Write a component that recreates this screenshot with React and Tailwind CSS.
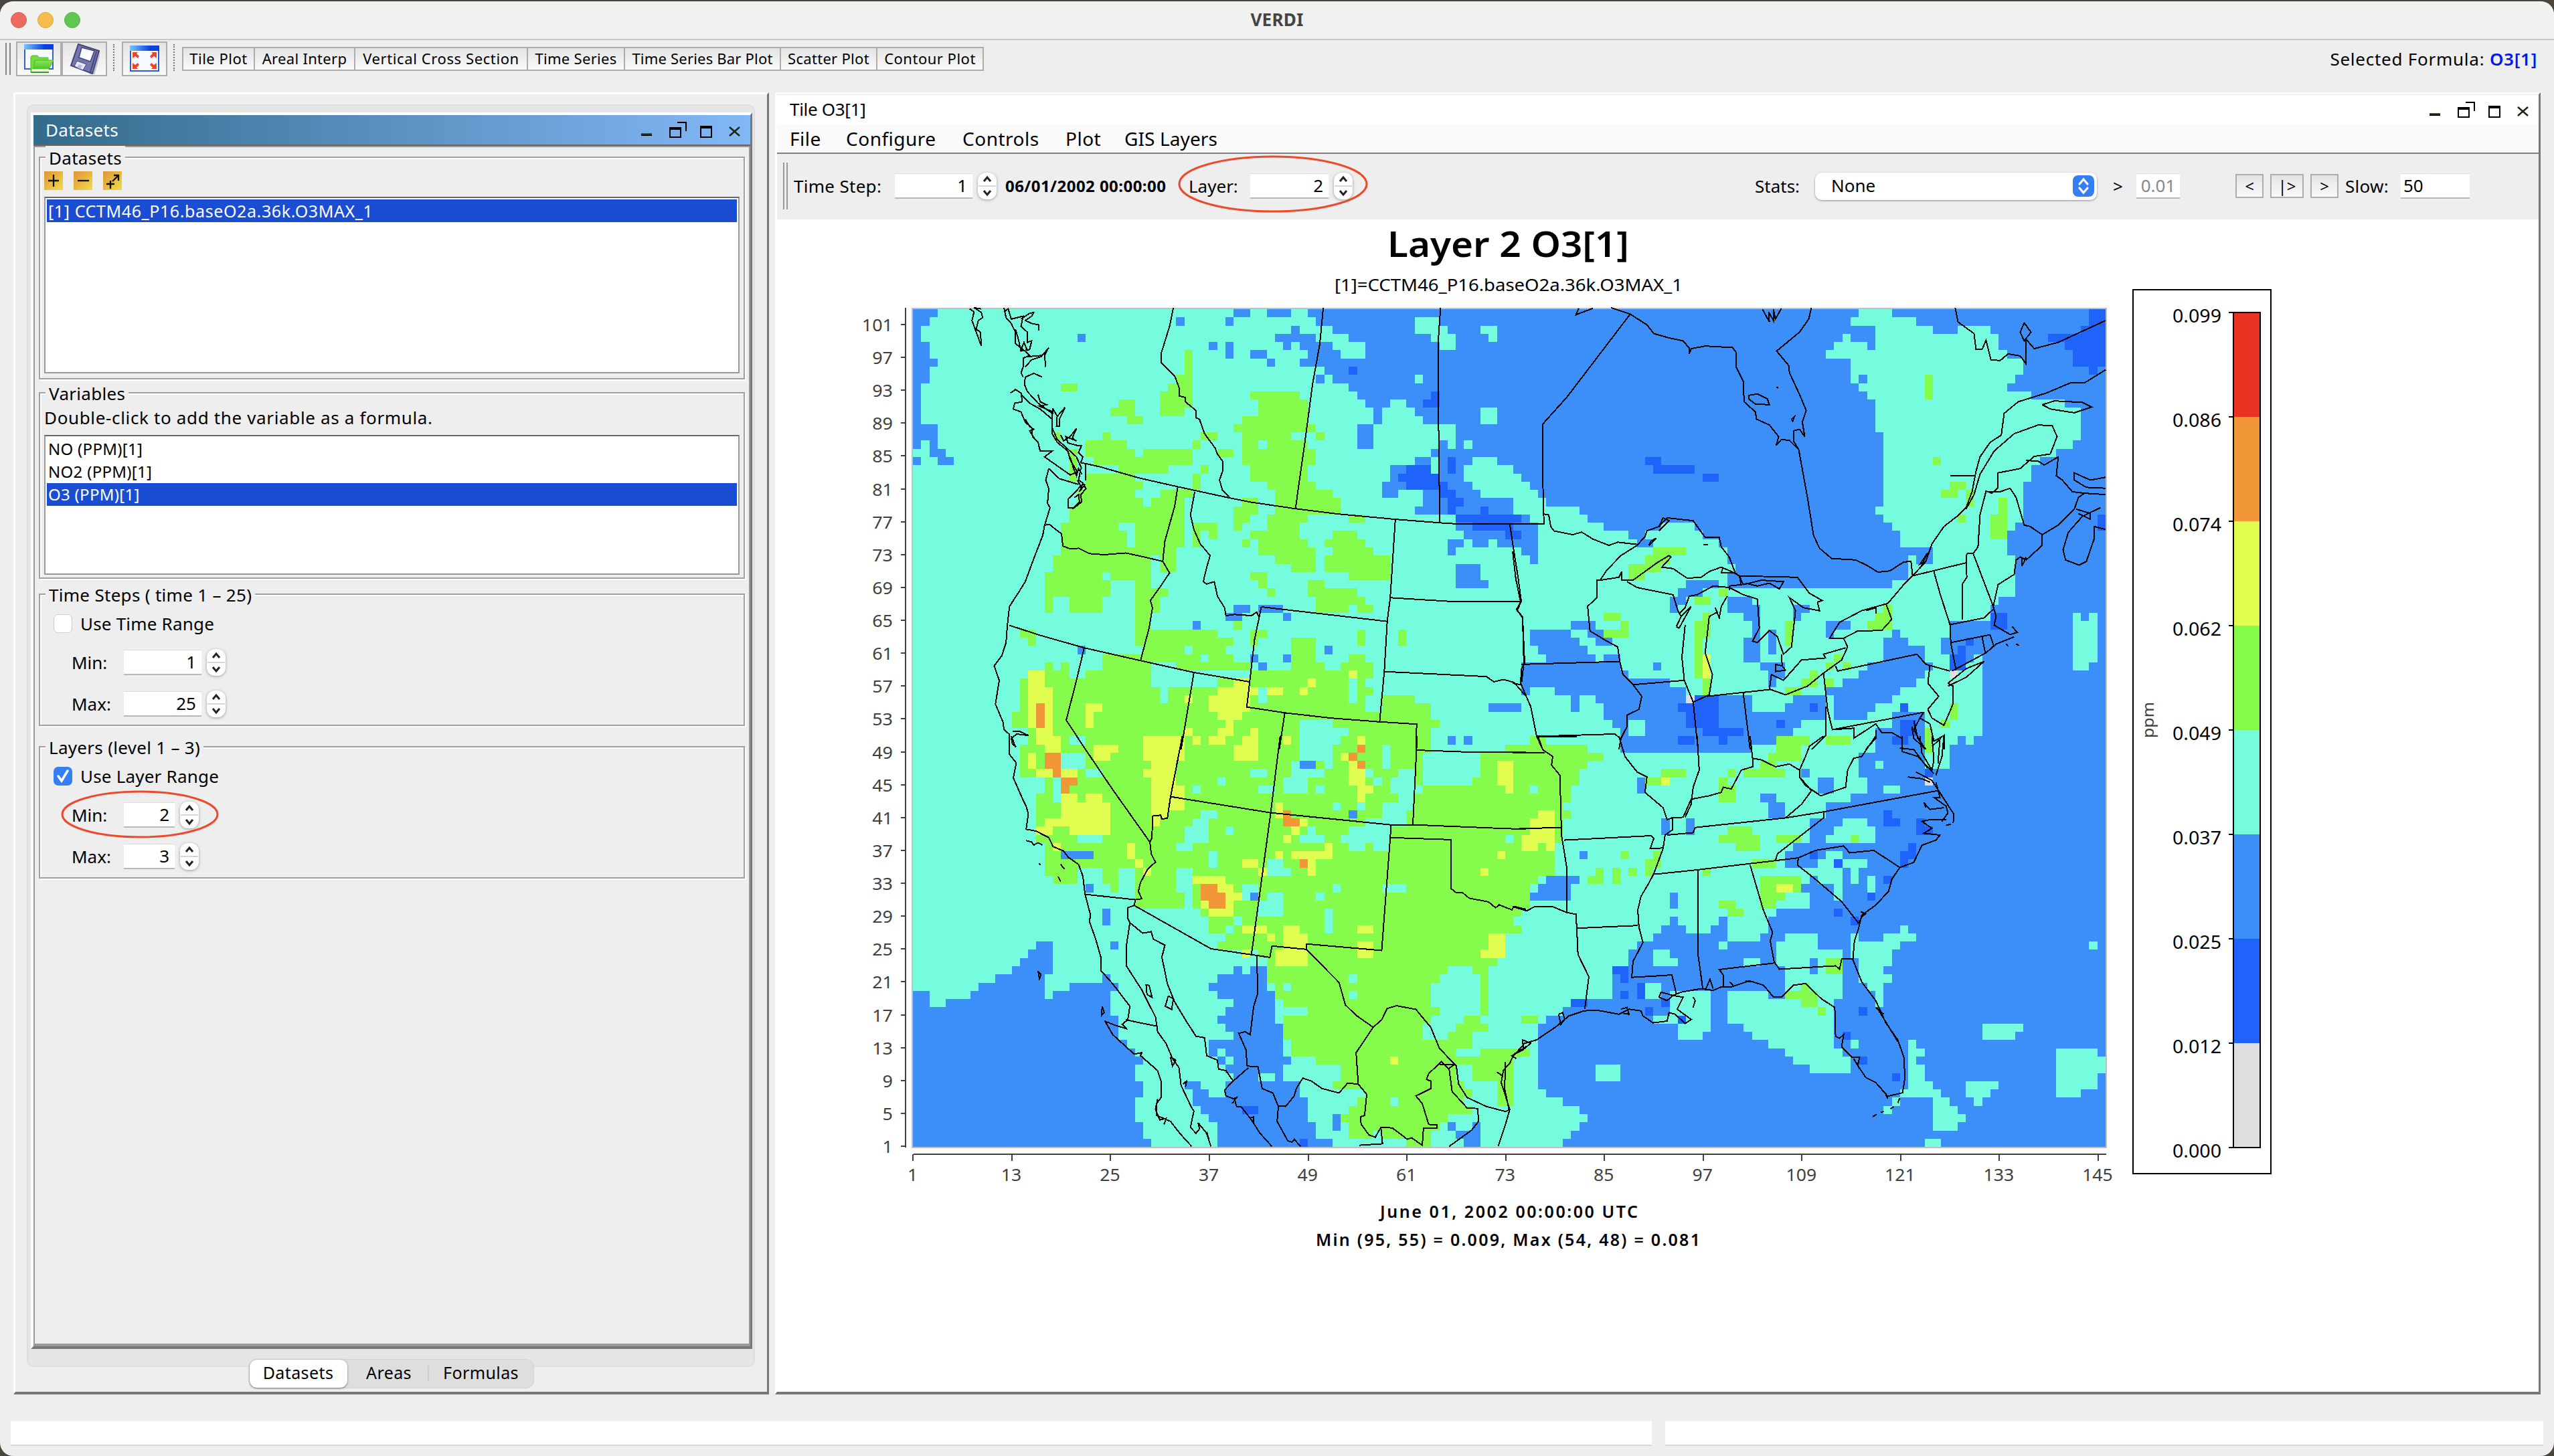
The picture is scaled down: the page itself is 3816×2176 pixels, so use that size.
import React from "react";

const AQUA = "#75fcdf";
const BLUE = "#3c8ff8";
const DEEP = "#1f63fa";
const GREEN = "#85fc4b";
const YELLOW = "#e1fd50";
const ORANGE = "#f19737";
const GRAY = "#dfdfdf";

// Plot geometry: 145 columns by 102 rows of cells.
const PX = 1364;
const PY = 462;
const PW = 1782;
const PH = 1252;
const CW = PW / 145;
const CH = PH / 102;

// Each sheet holds cell regions ("x y x y" staircase corners) and border polylines in its own scale.
const SHEETS = [
  {
    ox: 1280, oy: 440, sx: 1.568, sy: 2.306,
    cells: [
      [BLUE, "131 50 187 83 169 111 150 166 169 222 187 249 169 308 150 447 187 535 207 562 226 590 187 562 169 507 150 535|131 562 150 590|881 50 922 83|960 50 1016 83|747 83 768 111|862 83 881 111|517 138 536 166|825 166 844 194|862 166 881 222|922 194 960 222|960 222 978 249|1074 281 1093 308|1057 50 1568 618 1535 590 1500 562 1442 590 1423 646 1442 678 1460 706 1540 762 1568 873 1500 845 1423 817 1405 762 1308 734 1326 678 1268 706 1229 646 1248 590 1308 562 1345 535 1364 507 1383 535 1405 447 1326 419 1308 391 1288 364 1248 391 1229 447 1210 535 1172 447 1210 391 1190 364 1172 336 1152 308 1113 281 1093 249 1037 222 1057 194 1037 166 1016 194 997 166 978 138 1016 111 1037 138 1113 111 1075 83|1383 845 1423 873 1405 900|1442 845 1480 873|1405 932 1460 988 1480 1015|881 1076 922 1104 903 1130 862 1104|945 1076 997 1104|997 1104 1016 1130|787 1130 806 1158|517 1213 536 1245"],
      [AQUA, "1074 138 1152 166 1190 222 1132 194 1113 166|1308 83 1364 111 1383 138 1405 194 1364 166 1345 138|1460 111 1500 166 1480 138|1308 281 1326 308|1460 391 1500 447|1423 507 1442 535|1345 562 1364 618"],
      [DEEP, "1152 249 1172 281|1345 336 1364 391 1326 364|1288 590 1345 618 1364 646 1383 678 1405 762 1383 706 1364 678 1288 646 1268 618|1383 562 1405 618|1405 706 1423 734|1460 734 1480 762|1405 762 1560 790|1442 790 1545 817|1520 817 1560 845"],
      [GREEN, "768 194 787 391 768 419 709 340 728 308 747 281|478 308 517 336|611 364 652 419 670 447 631 419 594 391|458 479 478 507|574 479 594 507 631 535 652 562 670 535 787 590 728 618 611 590 555 562 536 507|787 507 806 535|806 479 844 507|844 535 881 562|806 590 825 618|787 618 806 662|497 535 517 646|536 618 646 646 670 678 652 706 670 734 690 706 709 678 747 662 806 678 787 706 768 873 747 960 709 905 690 1015 728 1048 709 1104 690 1158 844 1186 881 1213 862 1245 881 1273 922 1301 747 1273 670 1213 652 988 594 1048 574 1104 497 1048 458 1104 440 960 458 905 478 790 497 734 517 678|922 336 1037 364 1057 447 1074 475 1057 535 1074 590 1057 646 1074 678 1113 706 1132 754 1037 734 978 678 960 646 922 590 903 479 881 447 903 419 941 364|1074 479 1093 507|903 706 941 762 922 790 903 817 881 734|787 790 844 845 825 817 806 873|978 734 1037 762 1057 790 1037 845 1057 873 1074 960 1016 932 978 905 941 845 922 817 960 762|903 845 922 873|1152 762 1190 790|1113 817 1172 845 1190 873 1210 905 1248 988 1152 960 1093 905 1113 873 1093 845|922 960 960 1015 941 988|960 1015 978 1048|1057 988 1093 1015 1172 1048 1190 1076 1210 1104 1172 1076 1152 1104 1074 1048|378 1158 420 1213 403 1186|1172 1158 1190 1213|1268 1158 1288 1213|881 1130 903 1158|922 1158 960 1186 941 1213|574 1245 665 1273 690 1356 709 1412 728 1356 844 1328 922 1301 1016 1186 1074 1273 1093 1301 1132 1273 1152 1245 1190 1273 1210 1328 1190 1356 1210 1384 1190 1442 1229 1384 1308 1412 1345 1470 1364 1498 1345 1568 403 1498 360 1442 378 1328 440 1273 458 1301 478 1273 497 1328 536 1301"],
      [AQUA, "611 790 652 873 631 817|574 960 594 988|941 512 960 535|1016 479 1057 507|768 1213 787 1245|806 1245 825 1273|1037 1470 1113 1498 1152 1554 1074 1526|1152 1301 1172 1412|844 1356 862 1384|941 1356 960 1412"],
      [BLUE, "1093 1213 1113 1245|922 1245 941 1273|941 1273 960 1301|997 1245 1016 1273|1558 1273 1568 1328|1558 1356 1568 1384|1480 1412 1560 1442|1383 1526 1405 1554|1423 1526 1442 1554"],
      [YELLOW, "403 1301 440 1356 458 1526 478 1568 420 1498|536 1412 574 1442 555 1498|881 1328 922 1356 941 1384 922 1442 903 1470 881 1526 844 1498 862 1470 844 1442 825 1384 844 1356|922 1498 941 1568 903 1526|960 1356 997 1384|1037 1356 1057 1384|1057 1328 1074 1356|1152 1301 1172 1328|768 1384 787 1412|768 1498 787 1554|806 1526 825 1554|670 1526 768 1568|997 1526 1016 1554|1172 1526 1190 1554"],
      [ORANGE, "420 1412 440 1498"],
    ],
    lines: "536 583 570 594 660 632 750 662 860 697 920 715 1025 738 1130 757 1262 775 1366 787 1408 791 1568 791|742 46 733 110 714 200 714 237 745 281 755 320 755 350 770 355 770 370 795 400 795 425 803 430 815 480 840 530 845 550 857 575 857 610 850 640 857 675 873 697|1093 46 1085 170 1068 310 1050 510 1028 738|1368 46 1362 170 1363 430 1366 787|450 600 443 640 450 670 447 720 453 735 440 797 436 830 415 910 395 990 378 1030 358 1075 353 1140 350 1200 340 1245 322 1280 334 1330 325 1412 343 1475 345 1500 357 1515 357 1568|365 1505 380 1505 403 1520 375 1515 362 1530 365 1550 374 1560|450 600 475 635 520 655|527 600 515 560 500 540 470 500 458 460 458 410 425 375 400 335 393 310 395 285 415 272 435 285|360 340 372 328 385 340 388 370 370 375 367 395 385 405 395 440 410 460 412 490 425 510 430 540 458 540 440 560 500 622 517 612 500 570 495 540 470 510 458 480 458 430 430 395 405 375 385 345|395 430 405 455 415 465 405 470 418 500|458 420 460 395 470 420 488 390 475 430 475 455 468 455 470 415|478 485 485 505 500 490 515 462 505 495 515 505 490 490 495 512 515 520 527 520 520 545 530 560 525 580 536 583 536 640|500 560 508 600 515 625 520 600 528 620|525 600 520 640 530 650 537 670 525 690 527 715 510 735 495 735 495 705 510 685 525 660 517 640|530 650 522 680 535 655|510 700 520 690 522 715 505 740|345 46 350 80 362 100 372 130 372 170 390 190 405 210 390 220 390 250 385 270 390 285|385 85 405 65 415 62 410 75 395 90 410 100 427 105 427 125|345 60 355 50 362 85 390 75 385 110 400 130 400 165 410 160 405 190 385 195 378 150 372 120|385 190 392 165 400 195|400 215 435 210 450 183 440 210 443 250|395 250 410 225 435 213|265 50 275 60 270 90 285 150 292 178 290 130 280 120 285 90 295 80 292 62 275 46 292 50|425 345 430 370 445 380 428 385 460 405|440 795 452 793 462 805 480 825 483 867 500 877 520 875 545 893 580 897 630 891 665 902 717 920|752 665 745 730 722 850 717 920 733 960 710 1010 688 1055 693 1080 685 1150 665 1262|792 680 782 760 790 810 805 860 828 900 820 940 812 990 820 998 838 990 845 1040 862 1080 865 1107 885 1103 925 1107 937 1095 943 1113|948 1077 1243 1127|1262 775 1250 1045 1243 1127 1236 1300 1225 1473|1248 1045 1390 1058 1557 1058|1530 791 1538 870 1550 980 1557 1058 1547 1090 1560 1110 1563 1270 1558 1335|1236 1300 1475 1317 1493 1335 1515 1327 1540 1337 1568 1385|357 1140 430 1175 533 1218 665 1262 790 1303 920 1335|533 1218 515 1330 491 1467 536 1568|790 1303 760 1568|948 1077 932 1190 914 1422 1003 1442 1110 1460 1225 1473 1312 1481 1310 1568|1003 1442 990 1568",
  },
  {
    ox: 2260, oy: 440, sx: 1.668, sy: 2.306,
    cells: [
      [BLUE, "22 50 1478 1568"],
      [AQUA, "864 50 947 83 1008 111 1048 138 1110 111 1191 138 1214 205 1234 222 1274 281 1254 308 1234 336 1294 364 1418 507 1398 535 1357 562 1316 590 1294 646 1274 790 1254 817 1234 905 1254 1048 1214 1076 1194 1130 1171 1526 1151 1554 1130 1526 1110 1568 0 618 22 646 43 678 63 706 83 734 167 762 187 790 228 817 290 845 330 817 371 790 454 817 474 845 517 873 536 932 556 960 540 1015 947 988 988 905 1008 932 1048 873 967 817 947 790 924 762 905 734 924 479 905 364 885 336 864 308 844 222 781 194 801 166 824 138 844 166 885 194 905 111 844 83|1398 1101 1418 1130 1437 1101 1460 1273 1437 1301"],
      [BLUE, "864 281 885 308|1377 370 1418 391|0 790 63 932 43 905 22 873|0 762 22 790|310 845 351 873|434 988 513 1015 474 1048 434 1076 415 1101 391 1048 415 1015|536 1048 597 1076 617 1158 597 1130 577 1101|597 1158 617 1273 577 1186|637 1158 658 1245|617 1273 678 1328 658 1356 637 1301|709 1076 740 1101|699 1101 720 1130|148 1130 207 1158|43 1158 148 1186 167 1213 187 1245 63 1213|187 1158 228 1186 250 1213 207 1186|83 1245 207 1273|228 1245 270 1273|22 1273 270 1301 290 1328 393 1356 434 1384 597 1442 680 1412 699 1384 781 1470 720 1498 699 1526 658 1554 597 1568 270 1498 250 1470 228 1412 207 1384 167 1442 148 1384 103 1356|351 1273 371 1301|0 1412 22 1442|1090 1130 1171 1245 1151 1273 1130 1301 1090 1245 1069 1186|781 1130 844 1158|781 1158 801 1186|947 1158 967 1186|924 1186 988 1245|967 1213 1028 1273 1048 1301 1028 1328 1008 1356 967 1384 947 1412 905 1442 885 1470 801 1384 781 1356 824 1328 864 1301 885 1273 924 1245|947 1442 1030 1568 905 1498"],
      [AQUA, "290 1470 330 1526"],
      [DEEP, "0 817 22 845|0 762 8 790|454 1384 513 1498 577 1526 536 1554 513 1526 474 1498 434 1442 415 1412|415 1526 454 1554|740 1412 760 1442|658 1470 680 1498|967 1412 988 1442|967 1470 1010 1526 988 1554 947 1526|1191 1101 1234 1158|1110 1213 1130 1301 1090 1245|1130 1186 1151 1213|1437 50 1478 249 1460 281 1437 249 1398 194 1377 166 1335 138 1416 111|330 562 371 590|351 590 454 618|474 618 513 646|1460 762 1478 817"],
      [GREEN, "1028 281 1048 364|1048 562 1069 590|1090 646 1130 678 1110 706 1069 678|1130 678 1151 734|1110 762 1130 790|1214 706 1234 845 1191 762|351 877 434 905 393 932 371 960 330 988 290 932 330 905|513 1015 540 1048|454 1048 495 1076|474 1101 495 1186 474 1245 495 1384 474 1328 454 1130|228 1101 270 1130|270 1130 290 1186|228 1158 270 1186|681 1130 699 1213|924 1076 947 1158 885 1130 905 1101|801 1245 824 1273 801 1301 781 1273|824 1273 844 1301|740 1301 760 1356 720 1328|781 1328 801 1356|681 1356 720 1384|1090 1412 1110 1470|1069 1470 1090 1498|1028 1498 1048 1568|781 1526 844 1554|699 1526 740 1554 720 1568 658 1554|43 1526 83 1554 187 1568 0 1554"],
      [YELLOW, "474 1245 495 1328"],
      [GRAY, "434 1384 454 1412|1090 1301 1110 1324"],
    ],
    lines: "0 791 78 791 75 620 75 447 135 355 293 68 245 46|78 757 90 760 95 800 103 815 150 828 172 819 200 843 240 865 262 854 312 862|165 48 158 70 200 48|293 68 335 105 352 135 390 150 425 160 440 185 440 205 445 187 480 178 548 183 557 200 557 250 575 300 577 370 605 405 608 430 640 450 663 490 657 520 670 500 690 503 713 535|588 348 610 343 635 360 640 380 605 378 588 360 588 348|745 46 738 85 715 130 658 195 688 245 690 270 715 345 732 400 722 440 728 490 715 465 700 470 700 505 713 535 735 700 750 830 765 875 795 910 855 915 885 935 910 957 940 953 975 922 993 920 997 970|695 430 702 422 698 437 695 430|657 320 662 322|623 52 640 95 638 60 650 90 650 50 655 85 670 48|1103 46 1110 95 1150 135 1155 190 1170 190 1180 158 1192 225 1215 228 1235 205 1265 212 1280 240 1280 155 1300 187 1360 165 1478 90|1275 98 1292 130 1275 160 1265 130 1275 98|1478 260 1425 305 1390 305 1330 340 1260 370 1225 410 1218 485 1190 510 1165 560 1155 610 1145 680 1130 735 1112 760 1075 800 1045 860 1030 920 997 970|1130 740 1150 690 1165 620 1200 540 1250 480 1310 450 1345 453 1357 490 1340 550 1300 558 1265 600 1210 615 1210 665 1195 685 1180 678 1165 760 1160 870 1148 893 1132 893|1320 380 1350 367 1420 372 1443 388 1400 408 1340 395 1320 380|1090 625 1155 625|1182 680 1215 680 1240 668 1255 700 1275 795 1290 800 1320 828 1320 865 1280 915 1265 905 1255 915 1250 965 1210 1000 1198 1075 1205 1110 1200 1140 1240 1172 1258 1165 1245 1145|1270 905 1270 935 1280 905|1280 572 1310 575 1325 588 1360 560 1355 625 1370 640 1395 680 1425 685 1478 690|1320 828 1360 795 1400 740 1410 700 1425 685|1478 630 1440 640 1400 615 1400 640 1430 665 1478 668|1465 735 1420 765 1385 820 1372 880 1378 915 1412 933 1430 920 1450 840 1450 800 1478 810|1405 740 1440 755 1440 775 1410 755|997 970 1130 925 1132 893|1050 955 1065 1030 1090 1138 1092 1200 1105 1295|1130 925 1132 975 1120 1000 1120 1120|1148 893 1198 1075|1090 1138 1175 1115 1198 1085|1092 1200 1190 1173 1200 1215|1170 1180 1178 1235|1095 1298 1180 1235 1205 1205 1250 1180|1230 1205 1235 1213|1255 1205 1262 1210|1085 1340 1130 1290 1175 1265 1130 1320 1085 1350|1030 920 1015 930 1035 890 1015 945|997 970 975 1000 935 1065 870 1090 815 1130 790 1185 825 1185 860 1160 920 1158 945 1120 930 1065|880 1090 905 1080 905 1100|825 1185 835 1215 820 1260 775 1305 735 1350 680 1380 640 1360|640 1362 645 1310 675 1330 720 1260 780 1253 775 1240 830 1218|805 1280 810 1298 1008 1240 1030 1275 1090 1298|1040 1280 1035 1340 1062 1385 1035 1430 1045 1460 1075 1485 1098 1410 1098 1350 1085 1340|775 1305 785 1430 797 1500 1025 1440|415 1100 430 1080 440 1040 460 1035 500 1005 540 1010 575 1035 610 1050 615 1150 598 1195 610 1200 640 1158 660 1180 675 1240 695 1215 705 1090 690 1045 725 1080 765 1090 760 1060 772 1055 740 1030 710 975 565 970 555 960 540 905 520 870 515 838 480 838 450 780 385 770 365 800 335 815 330 835 310 865 270 900 235 950 218 985|365 800 375 770 390 780 365 815|340 865 358 840 345 850 340 865|475 862 487 862|218 985 265 975 272 955 272 985 300 985 360 925 390 900 395 905 372 940 400 945 435 978 470 975 490 955 520 940 545 955 565 970 570 1000 540 1005 540 1020|525 940 520 960 550 960|285 990 310 1010 400 1035 412 1090 420 1110|218 985 210 985 210 1045 187 1075 193 1160 235 1195 262 1215 267 1265 275 1310 300 1345 322 1385 315 1430 285 1450 285 1490 270 1530 265 1568|22 1275 267 1265|300 1345 428 1330|408 1145 420 1110 445 1075 415 1150 408 1145|430 1140 422 1250 428 1330 450 1405 490 1380 498 1310 480 1235 490 1110 510 1095 505 1080 515 1115 520 1075 535 1040|450 1405 462 1568|485 1385 640 1362|575 1375 592 1568|670 1240 672 1280 655 1275 655 1300 680 1295 672 1280|575 1000 620 985 675 990 665 1015 640 995 610 1005 580 995|565 970 575 1000|0 885 8 980 20 1060 10 1085 25 1115 30 1270 22 1290 20 1340 45 1420 60 1523 255 1515 268 1530|0 1340 20 1345|60 1523 75 1568|780 1420 780 1520 745 1568|797 1500 850 1495 850 1530 905 1480 920 1510 945 1510 970 1530 970 1568|905 1500 905 1530 880 1568|1000 1470 1010 1530 1030 1568|1025 1440 1015 1460 1040 1480 1050 1540 1075 1520 1075 1568|1015 1460 1000 1500 1020 1550|995 1490 1000 1530 1030 1568",
  },
  {
    ox: 1280, oy: 1100, sx: 1.568, sy: 2.24,
    cells: [
      [BLUE, "131 859 169 913 207 886 268 859 285 829 324 802 360 775 378 748 403 721 420 694 458 802 440 886 458 859 497 829 574 802 594 829 611 859 594 940 611 1021 631 1052 652 1079 670 1106 652 1160 670 1214 652 1299 670 1354 690 1374|881 775 903 802 922 775 960 859 978 994 997 1079 1016 1106 997 1160 1037 1214 1057 1299 1074 1354 1113 1374 844 1299 825 1272 806 1245 787 1187 768 1160 806 1187 825 1214 862 1160 881 1133 862 1106 844 1079 825 1021 881 994 862 967 844 940 862 913 881 886 844 859 825 829 844 802"],
      [AQUA, "844 1052 862 1079|862 1079 881 1106|945 1133 978 1160"],
      [GREEN, "378 31 420 4 1345 31 1326 170 1442 142 1460 58 1520 31 1568 580 1540 667 1520 748 1500 775 1480 940 1460 967 1480 994 1442 1052 1568 1079 1540 1245 1500 1160 1442 1214 1423 1245 1442 1272 1383 1299 1364 1326 1345 1374 1288 1354 1229 1326 1210 1354 1152 1299 1132 1272 1152 1245 1172 1214 1190 1187 1113 1160 1132 1106 1074 1079 1016 1021 997 886 978 829 960 748 941 721 844 694 862 667 825 607 806 580 652 553 652 443 611 530 594 502 574 443 517 502 458 475 440 363 420 142"],
      [AQUA, "497 4 536 31|478 58 536 116|536 116 574 142|420 142 440 196|458 142 478 224|517 336 574 363|806 252 844 280 825 363 787 390 747 363 768 309 787 280|862 309 881 336|825 390 844 443|747 443 787 525|768 525 787 580|844 142 862 170|922 116 960 142|1037 4 1132 31 1113 85 1074 116 1093 142 1057 196 997 142 1016 85|941 170 978 196|787 170 806 196|1093 85 1113 116|1190 116 1210 142|1229 31 1248 116|1268 116 1308 170 1326 196 1308 252 1288 309 1248 390 1210 363 1190 390 1152 363 1132 336 1152 309 1190 280 1229 224 1268 196 1248 142|1113 224 1132 252|1172 224 1190 252|1210 142 1229 170|1074 170 1093 196|1057 309 1074 336|1037 336 1093 363|960 416 997 475|978 443 1016 475|960 525 997 555|941 555 997 607|1113 502 1132 528|1229 502 1288 528|1074 528 1093 555|1093 580 1113 667|903 502 941 555|862 634 881 667|881 607 903 640|1152 802 1172 829|1152 859 1172 886|997 829 1016 859|997 913 1057 940|1383 775 1442 802 1460 940 1423 967 1405 994 1383 1021 1326 967 1345 940 1364 913 1345 829 1364 802|1405 1052 1460 1079|1405 1106 1442 1187 1423 1160|1248 1214 1268 1245|1520 336 1540 363|611 475 652 525"],
      [BLUE, "574 580 594 634|594 694 611 721|536 502 555 530|478 390 555 416|922 528 941 555|1037 85 1074 116|1152 252 1172 280|1383 4 1405 31|1423 4 1442 31|978 967 997 994|1113 1272 1132 1326|1383 1299 1405 1326|1442 1299 1460 1374 1423 1354 1405 1326"],
      [DEEP, "903 1245 941 1272|1037 1354 1057 1374"],
      [YELLOW, "420 4 478 58 440 31|403 58 420 116|420 116 458 142|478 116 517 142|555 31 611 58 594 85|478 196 517 224 536 196 574 224 594 336 497 309 440 280 478 252|420 309 458 336|458 363 478 390|631 363 652 416|652 416 670 443|670 443 690 475|670 4 768 85 747 170 768 252 728 280 709 309 690 142 670 116 690 85|903 4 941 85 881 31|825 4 862 31|787 4 806 31|997 4 1016 31|1152 85 1190 170 1210 196 1190 224 1172 170|1132 58 1152 85|1172 4 1190 31|1500 85 1540 196 1520 170|1558 336 1568 390|1500 390 1520 416|1460 443 1480 475|978 224 997 252|978 252 1016 280|1037 280 1057 309|1016 309 1037 336|997 336 1016 363|1093 363 1113 416 1074 443 1057 416 1016 390|1057 443 1074 475|978 390 997 416|903 416 941 443|945 443 960 475|787 475 862 502 881 528 903 555 881 607 825 580 806 502|903 634 960 667|960 667 978 694|997 634 1037 667 1057 775 978 721 997 694|1172 634 1210 667|1172 694 1210 748|1480 667 1520 748 1460 721|903 721 922 748|1248 1079 1268 1106"],
      [ORANGE, "440 58 478 142 458 116|478 142 517 170 497 196|997 252 1016 280 1037 309|1037 416 1057 443|806 502 844 525 862 580 825 555|1172 31 1190 58|1152 58 1172 85|1172 85 1190 116"],
    ],
    lines: "515 0 600 180 687 355 690 395 700 422 682 445 665 490 660 520 668 545 653 548 650 567|357 0 357 60 374 90 367 140 390 215 397 235 402 260 397 312 420 318 450 340 460 370 485 385 495 405 520 430 530 470 535 530|362 0 372 38 365 10|535 530 653 548|650 567 830 712 968 741 973 703 1053 714 1053 696 1230 718 1250 340 1393 347 1392 510 1405 525 1420 525 1435 543 1480 555 1497 575 1505 565 1535 582 1540 570 1568 580|763 0 735 205 728 275 715 278 712 265 693 268 692 340 687 355|735 203 970 257 1250 297 1303 297 1490 308 1568 312|992 0 970 257 925 730|1313 0 1303 297|1310 47 1440 54 1568 54|1252 297 1250 340|535 530 548 600 545 620 560 680 572 740 572 785 600 830 640 905 635 950 622 965 632 980 605 968 582 955 600 1000 650 1065 668 1060 665 1070 705 1120 713 1155 713 1210 703 1230 703 1270 735 1290 760 1335 785 1374|705 1215 700 1250 710 1285 725 1280 720 1300|650 567 635 575 635 610 640 625 632 700 632 770 668 850 680 885 700 940 705 990 725 1030 740 1080 755 1110 760 1170 785 1245 790 1255 782 1310 795 1330 803 1315 800 1295 820 1330 830 1374|820 1325 825 1350|735 1075 748 1085 740 1105 735 1075|765 1165 773 1155 770 1175|630 950 705 972|640 625 670 660 690 655 695 680 722 700 715 740 728 830 745 890 770 950 795 1005 815 1010 820 1070 845 1085 848 1115 865 1120 882 1155 862 1185 865 1205 885 1215 890 1240 900 1240 925 1285 945 1330 973 1374|880 1215 890 1210 880 1230|920 1280 930 1275 930 1300|678 832 685 835 692 875 680 865 678 832|730 870 742 880 738 915 723 905 730 870|425 787 432 800 428 812 425 787|575 905 580 925 574 935 575 905|478 430 487 445|472 470 478 487|397 350 410 355 415 365 425 357 435 365|427 425 430 432|937 735 940 860 930 905 922 1000 910 990 895 995 912 1050 915 1105 940 1107 950 1180 975 1195 988 1240 985 1290 1010 1355 1020 1360 1025 1350 1040 1374|882 1155 918 1110|988 1238 1005 1240 1025 1205 1030 1180 1045 1145 1065 1155 1090 1180 1130 1195 1150 1162 1175 1165 1195 1200 1190 1270 1180 1275 1182 1300 1200 1335 1215 1343 1228 1310 1255 1312 1290 1350 1300 1345 1325 1370 1328 1312 1360 1312 1360 1302 1340 1300 1325 1230 1310 1205 1345 1180 1345 1155 1335 1150 1340 1130 1370 1090 1388 1115 1395 1190 1430 1245 1455 1247 1457 1290 1440 1320 1388 1374|1228 1310 1232 1365 1178 1370|1053 714 1085 760 1130 825 1145 900 1170 935 1210 975 1230 950 1243 912 1265 903 1310 915 1345 975 1365 1045 1405 1105 1410 1165 1430 1210 1475 1240 1520 1257 1530 1250|1365 1100 1400 1100 1385 1115|1210 975 1170 1060 1175 1165|1568 1040 1540 1065 1530 1095 1515 1120 1510 1160 1530 1250 1520 1300 1503 1374|1560 1015 1562 1050 1535 1070 1545 1080|1500 1125 1515 1140|1520 1090 1518 1180 1528 1250",
  },
  {
    ox: 2260, oy: 1100, sx: 1.668, sy: 1.96,
    cells: [
      [BLUE, "1171 4 1478 1203 124 1183 148 1159 167 1136 187 1113 167 1089 124 1062 83 1038 63 847 83 823 124 799 148 775 249 678 290 631 310 608 351 584 371 560 391 535 415 560 434 584 495 560 516 535 536 608 617 584 637 535 658 510 740 462 720 439 740 415 760 388 681 340 700 318 740 244 781 197 844 172 885 125 864 51 905 27 924 4 1030 101 1090 27 1110 4 1130 27 1151 4|617 172 658 197 681 244 637 197|720 101 740 125|760 125 801 172|371 244 391 293|434 244 454 293|310 125 330 172|167 340 187 365|83 415 167 439 148 486 43 462 63 439|391 462 415 510|270 0 640 27 577 51 330 27"],
      [AQUA, "967 560 988 584 1008 608 967 631 947 678 924 702 947 725 924 799 905 753 885 725 864 655 844 584 864 608 924 584|681 584 760 655 740 678 658 608|536 753 637 775 681 678 740 702 760 631 824 775 801 920 824 945 844 991 740 968 699 945 681 920 637 893 597 870 577 847|391 753 495 870 474 893 415 847 351 823|330 725 371 775|351 631 391 655 415 678|516 608 536 631|577 655 617 678|844 893 864 920|988 893 1008 920 1028 945 1008 968 1028 1014 1048 1038 1069 1062 1090 1089 1110 1113 1130 1136 1110 1159 1048 1062 967 1038|947 1062 967 1089|924 1089 947 1113|1130 1014 1214 1038 1191 1062 1171 1089 1151 1062|1357 920 1460 945 1478 991 1460 1038 1418 1062|1171 847 1274 870 1254 893|1437 608 1460 631|1028 1183 1069 1203|207 968 270 1014|824 244 885 269 905 318 781 293 801 269|781 340 824 365 885 388 864 439 844 388 824 486 801 439 760 365|885 415 905 462|924 149 967 172|905 74 924 101"],
      [DEEP, "415 4 454 27|516 4 536 27|947 4 988 27|1028 101 1048 125|924 220 947 244 967 269|1008 244 1028 269 1048 293|988 318 1008 365 988 388 967 340|924 415 947 439|885 462 905 486|801 510 824 535|844 535 864 560|801 365 824 388|740 340 760 365|249 678 290 725 270 702|310 725 330 775|270 753 290 775|148 775 187 799|371 775 391 799|330 799 351 823|415 823 434 847|864 799 885 823|824 870 844 893|864 945 885 968|947 991 967 1014"],
      [GREEN, "0 27 43 4 83 27 187 51 228 74 187 101 167 149 148 197 124 318 103 415 63 439|124 220 148 244|371 101 434 125 391 149 330 125|536 101 556 125|516 125 536 149|516 149 556 197|658 4 720 74 658 101 681 125 577 101 617 74 637 51|781 4 844 27|1028 4 1048 51|536 269 597 293 617 340 556 318 516 293|658 293 720 318|844 293 864 318|597 365 658 388|270 340 290 365|351 340 371 388 351 415 330 365|207 388 228 439 187 415|249 388 270 439|290 388 310 415|474 388 495 415|617 415 720 462 681 486 658 510|516 486 556 510|536 510 577 535|781 655 824 702|720 725 740 753 760 799 720 775 681 753|760 799 781 823|22 823 63 847|0 510 22 535|0 560 22 584|0 920 22 945"],
      [AQUA, "43 149 63 172"],
      [YELLOW, "63 220 103 340 83 318 63 340 22 269 43 244|371 125 391 149|658 439 699 462"],
      [GRAY, "1028 125 1048 149"],
    ],
    lines: "1075 0 1070 60 1055 115|1050 110 1010 60 970 45 970 0|1015 0 1020 50 1045 100 1050 70 1045 0|1045 30 1065 10 1060 80|985 120 1020 125 1040 135|965 35 1000 40 1035 95|1005 105 1045 130 1070 175 1100 230 1098 255|1055 135 1065 180 1050 180 1080 205 1085 225 1070 250|1080 262 1092 258|1075 210 1040 215 1025 195 1030 210|1080 245 1040 245 1020 250 1045 270 1025 285 1065 290 1055 305 1020 320 1000 370 965 385 945 420 937 455 905 495 870 525 862 565 852 600 848 655 870 720 905 775 930 840 960 890 975 940 978 1000 972 1045 935 1055 905 1015 880 1000 860 965 865 940 845 940 820 910 825 875 815 885 805 880 803 795 770 770 730 725 700 730 670 765 650 765 640 750 625 730 590 717 545 735 520 735 500 745 470 740 420 750 400 760 370 750 365 765 385 775 400 760 425 765 410 800 445 830 430 842 405 815 390 810 385 835 350 840 325 820 320 805 290 800 265 815 210 803 178 805 140 820 110 850 60 890 30 900 0 940|115 815 125 810 130 830 120 845 115 815|25 890 45 900 30 915 5 930|270 800 285 795 290 815 275 812|480 745 492 712 500 740|450 765 455 775 450 795|580 718 600 720|540 720 550 730|868 515 880 520 870 530|850 945 865 975|905 795 925 815|930 1050 935 1062|965 1060 960 1075|950 1085 942 1092|925 1100 918 1102|908 1108 897 1115|908 795 960 895|385 290 450 283 455 268 680 240 775 222 1060 160|395 240 425 238 445 185 490 175 520 165 525 150 545 155 570 100 598 90 598 65 592 0|598 65 620 70 655 90 690 82 715 100 715 120 745 160 720 200 680 240|715 100 730 60 740 30 775 0|730 145 768 175 830 150 835 100 850 65 870 60 905 0|715 120 730 145|352 403 370 403 460 392 655 365 712 357 755 335 825 322 840 342 900 335 965 385|655 365 660 345 720 290 775 240 775 222|712 357 710 378 750 415 820 485 862 548 865 540|592 378 625 510 648 575 642 600 652 662 665 683 805 673 815 683 820 653 848 653|652 665 515 684 525 700 525 735|462 392 462 640 474 740|265 0 280 60 310 105 335 120 330 165 375 210 385 245 398 240 398 275 380 290 375 330 352 403 340 430 320 470 312 510 315 560 325 605 300 660 297 707 397 700 408 755|460 0 465 100 450 150 445 200 430 238|128 305 345 292 352 300 343 330 375 328|63 0 75 40 100 60 97 85 118 115 122 290 135 385 135 517 158 522 160 563 312 555|160 563 163 640 190 705 180 800|0 272 120 268|0 500 35 512 55 500 100 500 135 517|0 48 80 48|63 3 160 2",
  },
];

const toX = (s, v) => s.ox + v / s.sx;
const toY = (s, v) => s.oy + v / s.sy;
const snapX = (s, v) => PX + Math.min(145, Math.max(0, Math.round((toX(s, v) - PX) / CW))) * CW;
const snapY = (s, v) => PY + Math.min(102, Math.max(0, Math.round((toY(s, v) - PY) / CH))) * CH;

function cellPath(s, text) {
  return text
    .split("|")
    .map((poly) => {
      const n = poly.split(" ").map(Number);
      const x0 = snapX(s, n[0]).toFixed(1);
      let d = `M${x0} ${snapY(s, n[1]).toFixed(1)}`;
      for (let i = 2; i + 1 < n.length; i += 2) {
        d += `H${snapX(s, n[i]).toFixed(1)}V${snapY(s, n[i + 1]).toFixed(1)}`;
      }
      return `${d}H${x0}Z`;
    })
    .join("");
}

function linePath(s, text) {
  return text
    .split("|")
    .map((line) => {
      const n = line.split(" ").map(Number);
      let d = "";
      for (let i = 0; i + 1 < n.length; i += 2) {
        d += `${i ? "L" : "M"}${toX(s, n[i]).toFixed(1)} ${toY(s, n[i + 1]).toFixed(1)}`;
      }
      return d;
    })
    .join("");
}

const ORDER = [1, 0, 3, 2];

function TileMap() {
  return (
    <g shapeRendering="crispEdges">
      <rect x={PX} y={PY} width={PW} height={PH} fill={AQUA} />
      {ORDER.map((k) => SHEETS[k].cells.map(([fill, text], i) => <path key={`${k}-${i}`} d={cellPath(SHEETS[k], text)} fill={fill} />))}
      <rect x={PX - 1} y={PY - 1} width={PW + 2} height={PH + 2} fill="none" stroke="#c0c0c0" strokeWidth="2" />
      {SHEETS.map((s, i) => (
        <path key={i} d={linePath(s, s.lines)} fill="none" stroke="#000" strokeWidth="2" />
      ))}
    </g>
  );
}

const X_TICKS = [1, 13, 25, 37, 49, 61, 73, 85, 97, 109, 121, 133, 145];
const Y_TICKS = Array.from({ length: 26 }, (_, i) => 1 + i * 4);
const LEGEND = [
  ["0.099", "#ea3323"], ["0.086", ORANGE], ["0.074", YELLOW], ["0.062", GREEN],
  ["0.049", AQUA], ["0.037", BLUE], ["0.025", DEEP], ["0.012", GRAY], ["0.000", null],
];

function Chart() {
  return (
    <svg viewBox="1161 328 2632 1752" className="block h-[1752px] w-[2632px] shrink-0 font-['Noto_Sans',sans-serif]">
      <text x="2073" y="384" fontSize="53" fontWeight="600" textLength="361" lengthAdjust="spacingAndGlyphs">Layer 2 O3[1]</text>
      <text x="1994" y="435" fontSize="26" textLength="520" lengthAdjust="spacingAndGlyphs">[1]=CCTM46_P16.baseO2a.36k.O3MAX_1</text>
      <TileMap />
      <g stroke="#404040" strokeWidth="2" shapeRendering="crispEdges">
        <path d="M1353 460V1715M1365 1725H3147" />
        {Y_TICKS.map((t) => <path key={t} d={`M1346 ${1713 - (t - 1) * 12.28}h8`} />)}
        {X_TICKS.map((t) => <path key={t} d={`M${1364.4 + (t - 1) * 12.295} 1725v10`} />)}
      </g>
      <g fill="#404040" fontSize="26">
        {Y_TICKS.map((t) => (
          <text key={t} x="1334" y={1723 - (t - 1) * 12.28} textAnchor="end" textLength={String(t).length * 15.4} lengthAdjust="spacingAndGlyphs">{t}</text>
        ))}
        {X_TICKS.map((t) => (
          <text key={t} x={1363.5 + (t - 1) * 12.295} y="1765" textAnchor="middle" textLength={String(t).length * 15.2} lengthAdjust="spacingAndGlyphs">{t}</text>
        ))}
      </g>
      <text x="2062" y="1820" fontSize="25" fontWeight="600" textLength="385" lengthAdjust="spacing">June 01, 2002 00:00:00 UTC</text>
      <text x="1966" y="1862" fontSize="25" fontWeight="600" textLength="574" lengthAdjust="spacing">Min (95, 55) = 0.009, Max (54, 48) = 0.081</text>
      <g shapeRendering="crispEdges">
        <rect x="3187" y="433" width="206" height="1321" fill="#fff" stroke="#000" strokeWidth="2" />
        {LEGEND.map(([label, color], i) => (
          <g key={label}>
            {color && <rect x="3337" y={467 + i * 156} width="40" height="156" fill={color} />}
            <path d={`M3330 ${467 + i * 156}h8`} stroke="#000" strokeWidth="2" />
          </g>
        ))}
        <rect x="3337" y="467" width="40" height="1248" fill="none" stroke="#000" strokeWidth="2" />
      </g>
      {LEGEND.map(([label], i) => (
        <text key={label} x="3246" y={482 + i * 156} fontSize="27" textLength="73" lengthAdjust="spacingAndGlyphs">{label}</text>
      ))}
      <text transform="translate(3218 1103) rotate(-90)" fontSize="23" fill="#404040" textLength="54" lengthAdjust="spacingAndGlyphs">ppm</text>
    </svg>
  );
}

const PLOT_BUTTONS = [
  ["Tile Plot", "w-[107px] tracking-[0.5px]"],
  ["Areal Interp", "w-[150px] tracking-[0.3px]"],
  ["Vertical Cross Section", "w-[258px] tracking-[0.6px]"],
  ["Time Series", "w-[145px] tracking-[0.3px]"],
  ["Time Series Bar Plot", "w-[233px] tracking-[0.2px]"],
  ["Scatter Plot", "w-[144px] tracking-[0.3px]"],
  ["Contour Plot", "w-[159px] tracking-[0.5px]"],
];

function WindowIcons({ className }) {
  return (
    <svg viewBox="0 0 160 40" className={className} shapeRendering="crispEdges" fill="none" stroke="#000" strokeWidth="2">
      <path d="M6 26h16" stroke="#3a5030" />
      <path d="M6 28h16" />
      <path d="M49 18h16v13h-16zM48 17h18M60 9h13v13" />
      <path d="M49 19h16M95 17h16" />
      <path d="M95 15h16v16h-16z" />
      <path d="M138 16l15 13M153 16l-15 13" shapeRendering="auto" strokeWidth="2.4" stroke="#1a2410" />
    </svg>
  );
}

function Spinner() {
  return (
    <div className="h-[40px] w-[28px] rounded-[12px] bg-white shadow-[0_1px_4px_rgba(0,0,0,0.35)]">
      <svg viewBox="0 0 28 40" className="block h-[40px] w-[28px]" fill="none">
        <path d="M1 20h26" stroke="#d4d4d4" strokeWidth="2" />
        <path d="M9 13l5-6 5 6M9 27l5 6 5-6" stroke="#222" strokeWidth="3" />
      </svg>
    </div>
  );
}

function Field({ children, className }) {
  return <div className={`box-border flex h-[38px] items-center border-b-2 border-t border-b-[#b8b8b8] border-t-[#dcdcdc] bg-white text-[26px] ${className}`}>{children}</div>;
}

function Group({ title, className, children }) {
  return (
    <fieldset className={`relative mx-[6px] box-border border-2 border-[#a0a0a0] shadow-[2px_2px_0_#fff,inset_2px_2px_0_#fff] ${className}`}>
      <div className="absolute left-[8px] top-[-18px] bg-[#eee] px-[5px] text-[26px] leading-[36px] tracking-[0.3px]">{title}</div>
      {children}
    </fieldset>
  );
}

function RangeRow({ label, value, wide, className }) {
  return (
    <div className={`flex h-[40px] items-center pl-[47px] ${className}`}>
      <span className="w-[78px] text-[26px]">{label}</span>
      <Field className={wide ? "w-[116px] justify-end pr-[8px]" : "w-[76px] justify-end pr-[8px]"}>{value}</Field>
      <div className="ml-[8px]"><Spinner /></div>
    </div>
  );
}

function LeftPanel() {
  return (
    <div className="box-border flex h-[1946px] w-[1129px] flex-col border-b-4 border-l-[3px] border-r-[3px] border-t-[3px] border-b-[#777] border-l-white border-r-[#777] border-t-white px-[17px] pt-[15px]">
      <div className="relative box-border h-[1887px] w-[1088px] rounded-[10px] border-2 border-[#dedede] bg-[#e6e6e6] px-[4px] pt-[10px]">
        <div className="box-border flex h-[1848px] w-[1078px] flex-col border-b-4 border-l-[4px] border-r-[3px] border-t-[4px] border-b-[#777] border-l-white border-r-[#777] border-t-white bg-[#eee]">
          <div className="box-border flex h-[46px] w-full items-center justify-between border-b-2 border-[#666] bg-linear-to-r from-[#336b8b] to-[#83b8f8] pl-[18px] pr-[9px]">
            <span className="text-[26px] tracking-[0.3px] text-white">Datasets</span>
            <WindowIcons className="h-[40px] w-[160px]" />
          </div>
          <div className="box-border flex grow flex-col border-2 border-b-4 border-[#999]">
            <Group title="Datasets" className="mt-[14px] h-[333px] px-[6px] pt-[20px]">
              <div className="flex h-[28px] gap-[16px]">
                {["M6 14h16M14 5v18", "M6 14h17", "M5 19h12M11 14v12M14 15L22 7M16 6h7v8"].map((d) => (
                  <svg key={d} viewBox="0 0 28 28" className="h-[28px] w-[28px] bg-linear-to-br from-[#dd9436] to-[#f0dc4b]">
                    <path d={d} stroke="#111" strokeWidth="2.300" fill="none" />
                  </svg>
                ))}
              </div>
              <div className="mt-[10px] box-border h-[264px] border-2 border-[#999] border-t-[#666] bg-white p-[2px]">
                <div className="h-[34px] bg-[#1b4dd3] pl-[2px] text-[25px] leading-[34px] text-white tracking-[0.6px]">[1] CCTM46_P16.baseO2a.36k.O3MAX_1</div>
              </div>
            </Group>
            <Group title="Variables" className="mt-[19px] h-[279px] px-[6px] pt-[18px]">
              <div className="h-[36px] text-[26px] leading-[36px] tracking-[0.65px]">Double-click to add the variable as a formula.</div>
              <div className="mt-[8px] box-border h-[209px] border-2 border-[#999] border-t-[#666] bg-white p-[2px] text-[24px] leading-[34px] tracking-[0.3px]">
                <div className="h-[34px] pl-[2px]">NO (PPM)[1]</div>
                <div className="h-[34px] pl-[2px]">NO2 (PPM)[1]</div>
                <div className="h-[34px] bg-[#1b4dd3] pl-[2px] text-white">O3 (PPM)[1]</div>
              </div>
            </Group>
            <Group title="Time Steps ( time 1 – 25)" className="mt-[22px] h-[198px] pt-[29px]">
              <div className="flex h-[28px] items-center gap-[12px] pl-[20px]">
                <div className="h-[28px] w-[28px] rounded-[7px] border border-[#ccc] bg-white" />
                <span className="text-[26px] tracking-[0.2px]">Use Time Range</span>
              </div>
              <RangeRow label="Min:" value="1" wide className="mt-[24px]" />
              <RangeRow label="Max:" value="25" wide className="mt-[22px]" />
            </Group>
            <Group title="Layers (level 1 – 3)" className="mt-[30px] h-[198px] pt-[29px]">
              <div className="flex h-[28px] items-center gap-[12px] pl-[20px]">
                <svg viewBox="0 0 28 28" className="h-[28px] w-[28px] rounded-[7px] bg-[#347ff6]">
                  <path d="M7 14l5 7 9-15" stroke="#fff" strokeWidth="3.500" fill="none" strokeLinecap="round" />
                </svg>
                <span className="text-[26px] tracking-[0.2px]">Use Layer Range</span>
              </div>
              <RangeRow label="Min:" value="2" className="mt-[24px]" />
              <RangeRow label="Max:" value="3" className="mt-[22px]" />
              <svg viewBox="0 0 240 76" className="absolute left-[29px] top-[62px] h-[76px] w-[240px]">
                <ellipse cx="120" cy="38" rx="116" ry="34" fill="none" stroke="#ec4a2a" strokeWidth="3" />
              </svg>
            </Group>
          </div>
        </div>
      </div>
      <div className="relative z-10 mx-auto mt-[-12px] flex h-[44px] w-[426px] shrink-0 items-center rounded-[12px] border border-[#d2d2d2] bg-[#dedede] text-[25px] tracking-[0.4px]">
        <div className="flex h-[42px] w-[146px] items-center justify-center rounded-[11px] bg-white pb-[2px] shadow-[0_1px_3px_rgba(0,0,0,0.5)]">Datasets</div>
        <div className="w-[120px] pb-[2px] pl-[5px] text-center">Areas</div>
        <div className="h-[24px] w-[2px] bg-[#cdcdcd]" />
        <div className="grow pb-[2px] text-center">Formulas</div>
      </div>
    </div>
  );
}

function RightPanel() {
  return (
    <div className="box-border flex h-[1946px] w-[2638px] flex-col overflow-hidden border-b-4 border-l-[3px] border-r-[3px] border-t-[3px] border-b-[#777] border-l-white border-r-[#777] border-t-white bg-white">
      <div className="box-border flex h-[45px] shrink-0 items-center justify-between border-t border-[#e8e8e8] pl-[19px] pr-[9px]">
        <span className="pb-[2px] text-[26px] tracking-[-0.3px]">Tile O3[1]</span>
        <WindowIcons className="h-[40px] w-[160px]" />
      </div>
      <div className="box-border flex h-[44px] shrink-0 items-center border-b-2 border-[#808080] bg-[#fafafa] pl-[19px] text-[28px] tracking-[0.5px]">
        <span className="w-[84px]">File</span>
        <span className="w-[174px]">Configure</span>
        <span className="w-[154px]">Controls</span>
        <span className="w-[88px]">Plot</span>
        <span className="tracking-[0.1px]">GIS Layers</span>
      </div>
      <div className="relative flex h-[98px] shrink-0 items-center bg-[#eee] pb-[2px] text-[26px]">
        <div className="ml-[9px] h-[70px] w-[7px] border-x-2 border-[#999]" />
        <span className="ml-[9px] w-[151px] tracking-[0.3px]">Time Step:</span>
        <Field className="w-[116px] justify-end pr-[8px]">1</Field>
        <div className="ml-[8px]"><Spinner /></div>
        <span className="ml-[13px] w-[274px] whitespace-nowrap text-[24px] font-bold tracking-[0.45px]">06/01/2002 00:00:00</span>
        <span className="w-[92px]">Layer:</span>
        <Field className="w-[117px] justify-end pr-[8px]">2</Field>
        <div className="ml-[8px]"><Spinner /></div>
        <span className="ml-[601px] w-[90px]">Stats:</span>
        <div className="flex h-[41px] w-[421px] items-center justify-between rounded-[10px] bg-white pl-[24px] pr-[4px] shadow-[0_1px_3px_rgba(0,0,0,0.4)]">
          <span className="pb-[2px]">None</span>
          <svg viewBox="0 0 32 32" className="h-[32px] w-[32px] rounded-[8px] bg-[#347ff6]">
            <path d="M10 13l6-7 6 7M10 19l6 7 6-7" stroke="#fff" strokeWidth="3.200" fill="none" strokeLinecap="round" />
          </svg>
        </div>
        <span className="ml-[24px] w-[35px]">&gt;</span>
        <Field className="w-[65px] justify-center text-[#888]">0.01</Field>
        <div className="ml-[83px] flex gap-[10px] text-[24px]">
          <div className="flex h-[36px] w-[42px] items-center justify-center border-2 border-[#adadad] bg-linear-to-b from-[#e4e4e4] to-[#fafafa]">&lt;</div>
          <div className="flex h-[36px] w-[50px] items-center justify-center border-2 border-[#adadad] bg-linear-to-b from-[#e4e4e4] to-[#fafafa]">|&gt;</div>
          <div className="flex h-[36px] w-[42px] items-center justify-center border-2 border-[#adadad] bg-linear-to-b from-[#e4e4e4] to-[#fafafa]">&gt;</div>
        </div>
        <span className="ml-[10px] w-[83px] tracking-[0.3px]">Slow:</span>
        <Field className="w-[103px] pl-[4px]">50</Field>
        <svg viewBox="0 0 288 88" className="absolute left-[597px] top-[1px] h-[88px] w-[288px]">
          <ellipse cx="144" cy="44" rx="140" ry="41" fill="none" stroke="#ec4a2a" strokeWidth="3" />
        </svg>
      </div>
      <Chart />
    </div>
  );
}

function OpenIcon() {
  return (
    <svg viewBox="0 0 46 46" className="h-[46px] w-[46px]">
      <defs>
        <linearGradient id="bar" x1="0" x2="1"><stop offset="0" stopColor="#7bc4fb" /><stop offset="0.7" stopColor="#0a3fe0" /></linearGradient>
        <linearGradient id="leaf" x1="0" x2="0" y1="0" y2="1"><stop offset="0" stopColor="#8be35c" /><stop offset="1" stopColor="#52c52a" /></linearGradient>
      </defs>
      <rect x="2" y="2" width="42" height="36" fill="#f6faff" stroke="#2f66c8" strokeWidth="2" />
      <rect x="1" y="1" width="44" height="8" fill="url(#bar)" />
      <path d="M11 20l2-2h8l2 3h14v17H15l-4 5z" fill="#6fdc40" stroke="#4bc022" />
      <path d="M17 25h28l-7 13H15z" fill="url(#leaf)" stroke="#4bc022" />
      <path d="M13 38h25l-3 4H12z" fill="#e6f8de" />
      <path d="M11 42h27v2H11z" fill="#3c9a1e" />
    </svg>
  );
}

function SaveIcon() {
  return (
    <svg viewBox="0 0 46 46" className="h-[46px] w-[46px]">
      <path d="M16 4l30 9-9 33-6-2" fill="none" stroke="#c4c4cc" strokeWidth="3" />
      <path d="M14 1l31 10-10 34-32-12z" fill="#7477ad" stroke="#43467c" strokeWidth="2" />
      <path d="M19 6l19 5-6 16-17-6z" fill="#fbfbff" stroke="#43467c" strokeWidth="1.5" />
      <path d="M12 26l14 5-5 9-13-6z" fill="#e6e7f4" stroke="#43467c" strokeWidth="1" />
      <path d="M15 31l5 2-3 5-5-2z" fill="#b7b9d8" />
      <path d="M41 12l-9 31" stroke="#43467c" strokeWidth="2" />
    </svg>
  );
}

function Toolbar() {
  return (
    <div className="flex h-[78px] items-start pl-[8px] pr-[25px]">
      <div className="mt-[4px] h-[48px] w-[8px] border-x-2 border-[#888]" />
      <div className="ml-[8px] mt-[2px] flex h-[52px] border-2 border-[#adadad] bg-linear-to-b from-[#e4e4e4] to-[#fafafa]">
        <div className="flex w-[68px] items-center justify-center border-r-4 border-[#adadad]"><OpenIcon /></div>
        <div className="flex w-[64px] items-center justify-center"><SaveIcon /></div>
      </div>
      <div className="ml-[9px] mt-[6px] h-[40px] border-l-2 border-dotted border-[#777]" />
      <div className="ml-[11px] mt-[2px] flex h-[52px] w-[68px] items-center justify-center border-2 border-[#adadad] bg-linear-to-b from-[#e4e4e4] to-[#fafafa]">
        <svg viewBox="0 0 46 40" className="h-[40px] w-[46px]">
          <rect x="2" y="1" width="42" height="37" fill="#f6f9ff" stroke="#2a5fd0" strokeWidth="2" />
          <rect x="1" y="0" width="44" height="8" fill="url(#bar)" />
          <path d="M5 10h8l-2 2 4 4-2 3-4-3-4 3zM41 10h-8l2 2-4 4 2 3 4-3 4 3zM5 35h8l-2-2 4-4-2-3-4 3-4-3zM41 35h-8l2-2-4-4 2-3 4 3 4-3z" fill="#e8472a" />
        </svg>
      </div>
      <div className="ml-[9px] mt-[6px] h-[40px] border-l-2 border-dotted border-[#777]" />
      <div className="ml-[11px] mt-[10px] flex h-[36px] border-l-2 border-[#adadad] text-[22px]">
        {PLOT_BUTTONS.map(([label, width]) => (
          <div key={label} className={`box-border flex items-center justify-center whitespace-nowrap border-y-2 border-r-2 border-[#adadad] bg-linear-to-b from-[#e4e4e4] to-[#fafafa] pb-[2px] ${width}`}>{label}</div>
        ))}
      </div>
      <div className="ml-auto mt-[10px] text-[26px] leading-[36px] tracking-[0.75px]">
        Selected Formula: <span className="font-semibold text-[#0018f5]">O3[1]</span>
      </div>
    </div>
  );
}

export default function App() {
  return (
    <div className="flex h-[2176px] w-[3816px] flex-col overflow-hidden bg-[#4a463e] font-['Noto_Sans',sans-serif] text-black">
      <div className="mt-[2px] flex h-[2174px] flex-col overflow-hidden rounded-[20px] bg-[#eee]">
        <div className="box-border flex h-[58px] shrink-0 items-center border-b-2 border-[#c8c8c6] bg-[#f1f1ef] pl-[16px]">
          <div className="flex w-[120px] gap-[16px]">
            <div className="h-[24px] w-[24px] rounded-full border border-[#d85a4e] bg-[#ed6a5e]" />
            <div className="h-[24px] w-[24px] rounded-full border border-[#dba63f] bg-[#f4be4f]" />
            <div className="h-[24px] w-[24px] rounded-full border border-[#55ae45] bg-[#61c554]" />
          </div>
          <div className="grow pb-[2px] pr-[136px] text-center text-[26px] font-bold tracking-[0.3px] text-[#444]">VERDI</div>
        </div>
        <Toolbar />
        <div className="flex gap-[9px] pl-[20px]">
          <LeftPanel />
          <RightPanel />
        </div>
        <div className="mt-[40px] flex gap-[20px] pl-[16px]">
          <div className="h-[37px] w-[2452px] border-b-2 border-[#d8d8d8] bg-white" />
          <div className="h-[37px] w-[1312px] border-b-2 border-[#d8d8d8] bg-white" />
        </div>
      </div>
    </div>
  );
}
